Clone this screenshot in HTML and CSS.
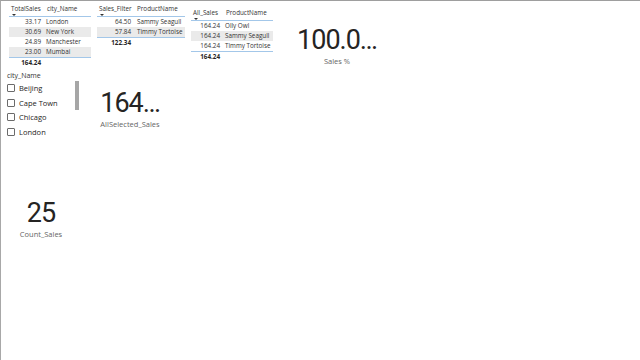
FILE: index.html
```html
<!DOCTYPE html>
<html>
<head>
<meta charset="utf-8">
<link rel="stylesheet" href="styles.css">
</head>
<body>
<div class="canvas">
  <div class="visual tbl t1">
    <div class="tr thead"><div class="th">TotalSales<span class="sort"></span></div><div class="th c2">city_Name</div></div>
    <div class="tr"><div class="num">33.17</div><div class="c2">London</div></div>
    <div class="tr alt"><div class="num">30.69</div><div class="c2">New York</div></div>
    <div class="tr"><div class="num">24.89</div><div class="c2">Manchester</div></div>
    <div class="tr alt last"><div class="num">23.00</div><div class="c2">Mumbai</div></div>
    <div class="tr total"><div class="num">164.24</div><div class="c2"></div></div>
  </div>

  <div class="visual tbl t2">
    <div class="tr thead"><div class="th">Sales_Filter<span class="sort"></span></div><div class="th c2">ProductName</div></div>
    <div class="tr"><div class="num">64.50</div><div class="c2">Sammy Seagull</div></div>
    <div class="tr alt last"><div class="num">57.84</div><div class="c2">Timmy Tortoise</div></div>
    <div class="tr total"><div class="num">122.34</div><div class="c2"></div></div>
  </div>

  <div class="visual tbl t3">
    <div class="tr thead"><div class="th">All_Sales<span class="sort"></span></div><div class="th c2">ProductName</div></div>
    <div class="tr"><div class="num">164.24</div><div class="c2">Olly Owl</div></div>
    <div class="tr alt"><div class="num">164.24</div><div class="c2">Sammy Seagull</div></div>
    <div class="tr last"><div class="num">164.24</div><div class="c2">Timmy Tortoise</div></div>
    <div class="tr total"><div class="num">164.24</div><div class="c2"></div></div>
  </div>

  <div class="visual card card1">
    <div class="big">100.0…</div>
    <div class="label">Sales %</div>
  </div>

  <div class="visual slicer">
    <div class="slicer-head">city_Name</div>
    <div class="item"><span class="box"></span><span>Beijing</span></div>
    <div class="item"><span class="box"></span><span>Cape Town</span></div>
    <div class="item"><span class="box"></span><span>Chicago</span></div>
    <div class="item"><span class="box"></span><span>London</span></div>
    <div class="scrollbar"></div>
  </div>

  <div class="visual card card2">
    <div class="big">164…</div>
    <div class="label">AllSelected_Sales</div>
  </div>

  <div class="visual card card3">
    <div class="big">25</div>
    <div class="label">Count_Sales</div>
  </div>
</div>
</body>
</html>
```

FILE: styles.css
```css
html, body {
  margin: 0;
  padding: 0;
  background: #ffffff;
}

.canvas {
  position: relative;
  width: 640px;
  height: 360px;
  box-sizing: border-box;
  border-top: 1px solid #9e9e9e;
  border-left: 1px solid #a8a8a8;
  background: #ffffff;
  overflow: hidden;
  font-family: "Segoe UI", "Open Sans", sans-serif;
  color: #252423;
}

.visual {
  position: absolute;
}

/* tables */
.tbl {
  font-size: 6.3px;
  color: #333333;
}

.tr {
  display: grid;
  height: 10px;
  line-height: 10px;
  white-space: nowrap;
}

.t1 { left: 8px; top: -1px; width: 82px; }
.t2 { left: 96px; top: -1px; width: 88px; }
.t3 { left: 190px; top: 2px; width: 82px; }

.t1 .tr { grid-template-columns: 34px 1fr; }
.t2 .tr { grid-template-columns: 36px 1fr; }
.t3 .tr { grid-template-columns: 31px 1fr; }

.thead {
  height: 17px;
  border-bottom: 1px solid #a3c7e9;
  box-sizing: border-box;
  line-height: 9px;
}

.th {
  padding-top: 4px;
  padding-left: 2px;
  color: #333333;
}

.t3 .thead { height: 18px; }
.t3 .th { padding-top: 5px; }

.sort {
  display: block;
  width: 0;
  height: 0;
  margin-top: 1px;
  margin-left: 1px;
  border-left: 2px solid transparent;
  border-right: 2px solid transparent;
  border-top: 2px solid #333333;
}

.th.c2 { padding-left: 4px; }

.num {
  text-align: right;
  padding-right: 2px;
}

.c2 { padding-left: 3px; }
.t2 .c2 { padding-left: 4px; }

.alt { background: #eaeaea; }

.last {
  border-bottom: 1px solid #a3c7e9;
  height: 11px;
  box-sizing: border-box;
}

.total {
  font-weight: 700;
  color: #252423;
  line-height: 10px;
}

/* cards */
.card {
  width: 80px;
  text-align: center;
}

.card1 { left: 296px; top: 23px; }
.card2 { left: 89px; top: 86px; }
.card3 { left: 0px; top: 196px; }

.big {
  font-family: "Roboto", "DejaVu Sans Condensed", sans-serif;
  font-size: 27px;
  line-height: 32px;
  letter-spacing: -1px;
  color: #252423;
  white-space: nowrap;
}

.label {
  font-size: 7.5px;
  line-height: 10px;
  color: #666666;
  white-space: nowrap;
}

/* slicer */
.slicer {
  left: 6px;
  top: 70px;
  width: 72px;
}

.slicer-head {
  font-size: 7px;
  line-height: 9px;
  color: #333333;
  margin-bottom: 1px;
}

.item {
  display: flex;
  align-items: center;
  gap: 4px;
  height: 14.5px;
  font-size: 7.5px;
  color: #252423;
}

.box {
  width: 8px;
  height: 8px;
  box-sizing: border-box;
  border: 1px solid #6b6b6b;
  border-radius: 1px;
  background: #ffffff;
}

.scrollbar {
  position: absolute;
  left: 68px;
  top: 10px;
  width: 4px;
  height: 29px;
  background: #a6a6a6;
}
```
